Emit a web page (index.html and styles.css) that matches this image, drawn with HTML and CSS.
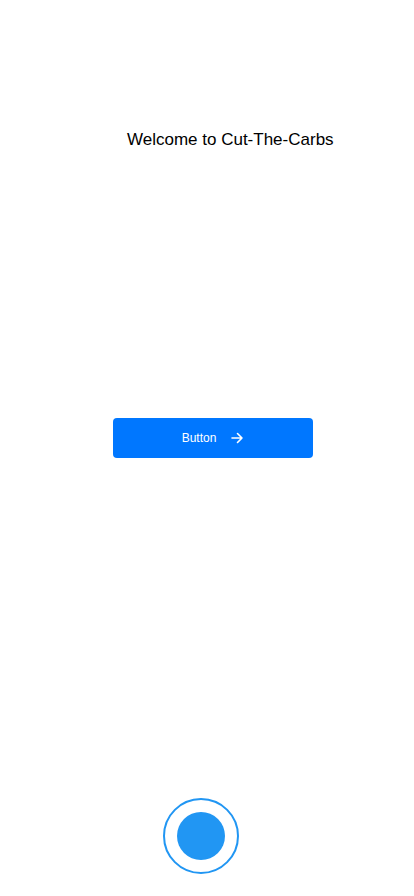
FILE: index.html
```html
<!DOCTYPE html>
<html>
<head>
<meta charset="utf-8">
<link rel="stylesheet" href="styles.css">
</head>
<body>
<div class="screen">
  <h1 class="title">Welcome to Cut-The-Carbs</h1>
  <button class="btn">
    <span>Button</span>
    <svg width="14" height="14" viewBox="0 0 14 14" fill="none" stroke="#fff" stroke-width="1.6" stroke-linecap="round" stroke-linejoin="round"><path d="M2 7h10M7.5 2.5L12 7l-4.5 4.5"/></svg>
  </button>
  <div class="record">
    <div class="record-inner"></div>
  </div>
</div>
</body>
</html>
```
FILE: styles.css
```css
html, body {
  margin: 0;
  padding: 0;
  background: #fff;
}
.screen {
  width: 414px;
  height: 896px;
  display: flex;
  flex-direction: column;
  align-items: flex-start;
  font-family: "Liberation Sans", Arial, sans-serif;
}
.title {
  margin: 130px 0 0 127px;
  font-size: 17px;
  font-weight: normal;
  line-height: 20px;
  color: #000;
}
.btn {
  margin: 268px 0 0 113px;
  width: 200px;
  height: 40px;
  border: none;
  border-radius: 4px;
  background: #0077ff;
  color: #fff;
  font-family: "Liberation Sans", Arial, sans-serif;
  font-size: 12px;
  display: flex;
  align-items: center;
  justify-content: center;
  gap: 14px;
  padding: 0;
}
.btn svg {
  display: block;
}
.record {
  margin: auto 0 22px 163px;
  width: 72px;
  height: 72px;
  border: 2px solid #2196f3;
  border-radius: 50%;
  display: flex;
  align-items: center;
  justify-content: center;
}
.record-inner {
  width: 48px;
  height: 48px;
  border-radius: 50%;
  background: #2196f3;
}
```
